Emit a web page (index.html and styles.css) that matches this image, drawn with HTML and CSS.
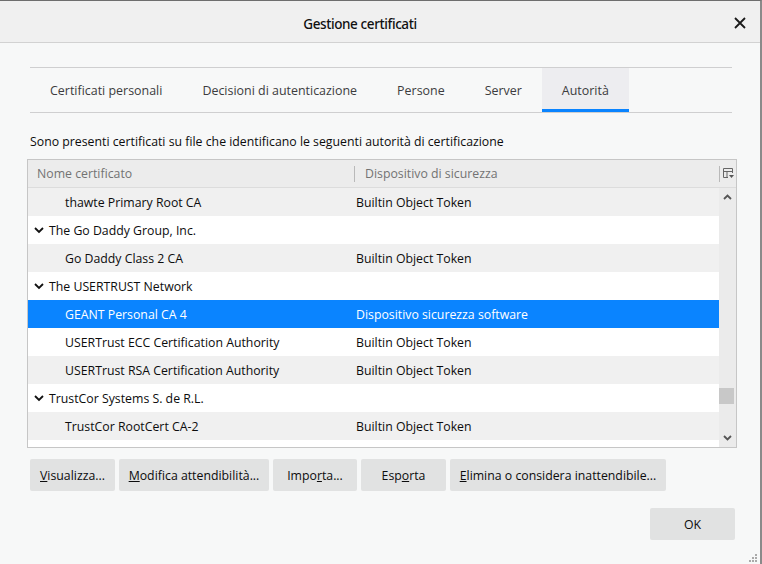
FILE: index.html
```html
<!DOCTYPE html>
<html lang="it">
<head>
<meta charset="utf-8">
<link rel="stylesheet" href="styles.css">
</head>
<body>
<div class="window">
  <div class="titlebar">
    <span class="title">Gestione certificati</span>
    <svg class="close" width="12" height="12" viewBox="0 0 12 12"><path d="M1 1 L11 11 M11 1 L1 11" stroke="#1a1a1a" stroke-width="1.8" fill="none"/></svg>
  </div>
  <div class="content">
    <div class="tabs">
      <div class="tab">Certificati personali</div>
      <div class="tab">Decisioni di autenticazione</div>
      <div class="tab">Persone</div>
      <div class="tab">Server</div>
      <div class="tab selected">Autorità</div>
    </div>
    <p class="desc">Sono presenti certificati su file che identificano le seguenti autorità di certificazione</p>
    <div class="tree">
      <div class="thead">
        <div class="col1">Nome certificato</div>
        <div class="col2">Dispositivo di sicurezza</div>
        <div class="picker">
          <svg width="11" height="11" viewBox="0 0 11 11"><path d="M0.5 0.5 H9.5 V5 M0.5 0.5 V9.5 H5 M0.5 3.5 H9.5 M4 3.5 V9.5" stroke="#666" fill="none"/><path d="M6 7 H11 L8.5 10 Z" fill="#555"/></svg>
        </div>
      </div>
      <div class="tbody">
        <div class="rows">
          <div class="row alt"><span class="name child">thawte Primary Root CA</span><span class="dev">Builtin Object Token</span></div>
          <div class="row"><span class="name parent"><svg class="twisty" width="10" height="7" viewBox="0 0 10 7"><path d="M1 1 L5 5 L9 1" stroke="#111" stroke-width="1.8" fill="none"/></svg>The Go Daddy Group, Inc.</span></div>
          <div class="row alt"><span class="name child">Go Daddy Class 2 CA</span><span class="dev">Builtin Object Token</span></div>
          <div class="row"><span class="name parent"><svg class="twisty" width="10" height="7" viewBox="0 0 10 7"><path d="M1 1 L5 5 L9 1" stroke="#111" stroke-width="1.8" fill="none"/></svg>The USERTRUST Network</span></div>
          <div class="row sel"><span class="name child">GEANT Personal CA 4</span><span class="dev">Dispositivo sicurezza software</span></div>
          <div class="row"><span class="name child">USERTrust ECC Certification Authority</span><span class="dev">Builtin Object Token</span></div>
          <div class="row alt"><span class="name child">USERTrust RSA Certification Authority</span><span class="dev">Builtin Object Token</span></div>
          <div class="row"><span class="name parent"><svg class="twisty" width="10" height="7" viewBox="0 0 10 7"><path d="M1 1 L5 5 L9 1" stroke="#111" stroke-width="1.8" fill="none"/></svg>TrustCor Systems S. de R.L.</span></div>
          <div class="row alt"><span class="name child">TrustCor RootCert CA-2</span><span class="dev">Builtin Object Token</span></div>
        </div>
        <div class="scrollbar">
          <svg class="arrow" width="9" height="6" viewBox="0 0 9 6"><path d="M1 5 L4.5 1.5 L8 5" stroke="#555" stroke-width="1.8" fill="none"/></svg>
          <div class="track"><div class="thumb"></div></div>
          <svg class="arrow" width="9" height="6" viewBox="0 0 9 6"><path d="M1 1 L4.5 4.5 L8 1" stroke="#555" stroke-width="1.8" fill="none"/></svg>
        </div>
      </div>
    </div>
    <div class="actions">
      <button class="btn b1"><u>V</u>isualizza...</button>
      <button class="btn b2"><u>M</u>odifica attendibilità...</button>
      <button class="btn b3">Impo<u>r</u>ta...</button>
      <button class="btn b4">Esp<u>o</u>rta</button>
      <button class="btn b5"><u>E</u>limina o considera inattendibile...</button>
    </div>
    <div class="footer">
      <button class="btn ok">OK</button>
    </div>
  </div>
  <svg class="grip" width="8" height="8" viewBox="0 0 8 8"><g fill="#aaa"><rect x="6" y="0" width="2" height="2"/><rect x="3" y="3" width="2" height="2"/><rect x="6" y="3" width="2" height="2"/><rect x="0" y="6" width="2" height="2"/><rect x="3" y="6" width="2" height="2"/><rect x="6" y="6" width="2" height="2"/></g></svg>
</div>
</body>
</html>
```

FILE: styles.css
```css
* { box-sizing: border-box; }
html, body { margin: 0; padding: 0; }
body {
  width: 762px;
  height: 564px;
  overflow: hidden;
  font-family: "Open Sans", "Noto Sans", sans-serif;
  font-size: 12px;
  color: #0c0c0d;
  background: #f7f8f8;
}
.window {
  position: relative;
  width: 762px;
  height: 564px;
  border-top: 1px solid #6e6e6e;
  border-right: 2px solid #8a8a8a;
  background: #f7f8f8;
  display: flex;
  flex-direction: column;
}
.titlebar {
  height: 42px;
  flex: none;
  background: #f0f0f0;
  border-bottom: 1px solid #d2d2d2;
  display: flex;
  align-items: center;
  justify-content: center;
  position: relative;
  padding-top: 4px;
  padding-right: 40px;
}
.title {
  font-family: "Noto Sans", sans-serif;
  font-size: 13.5px;
  font-weight: 500;
  letter-spacing: -0.4px;
  color: #111;
}
.close {
  position: absolute;
  right: 14px;
  top: 16px;
}
.content {
  flex: 1;
  padding: 24px 28px 0 30px;
  display: flex;
  flex-direction: column;
}
.tabs {
  display: flex;
  border-top: 1px solid #cfcfd0;
  border-bottom: 1px solid #cfcfd0;
  height: 46px;
  width: 702px;
}
.tab {
  height: 44px;
  padding: 4px 20px 0 20px;
  display: flex;
  align-items: center;
  font-size: 12.45px;
  color: #3c3c3e;
  border-bottom: 3px solid transparent;
}
.tab.selected {
  background: #ededf0;
  border-bottom-color: #0a84ff;
}
.desc {
  margin: 20px 0 9px 0;
  font-size: 12.3px;
  color: #0c0c0d;
}
.tree {
  margin-left: -3px;
  width: 710px;
  height: 289px;
  border: 1px solid #c6c6c6;
  background: #fff;
  display: flex;
  flex-direction: column;
}
.thead {
  height: 28px;
  flex: none;
  background: #ececec;
  border-bottom: 1px solid #dcdcdc;
  display: flex;
  align-items: center;
  color: #737373;
  font-size: 12.3px;
}
.col1 { width: 326px; padding-left: 9px; }
.col2 {
  width: 365px;
  padding-left: 10px;
  border-left: 1px solid #b9b9b9;
  line-height: 16px;
}
.picker {
  flex: 1;
  height: 16px;
  border-left: 1px solid #b9b9b9;
  display: flex;
  align-items: center;
  justify-content: center;
}
.tbody {
  flex: 1;
  display: flex;
  overflow: hidden;
}
.rows { width: 691px; }
.row {
  height: 28px;
  display: flex;
  align-items: center;
  font-size: 12.3px;
  color: #0c0c0d;
  background: #fff;
}
.row.alt { background: #f0f0f0; }
.row.sel { background: #0a84ff; color: #fff; }
.name { width: 328px; display: flex; align-items: center; }
.name.child { padding-left: 37px; }
.name.parent { padding-left: 6px; }
.twisty { margin-right: 5px; }
.scrollbar {
  width: 17px;
  background: #ebebeb;
  display: flex;
  flex-direction: column;
  align-items: center;
}
.arrow { flex: none; margin: 6px 0; }
.track { flex: 1; width: 100%; position: relative; }
.thumb {
  position: absolute;
  left: 0;
  right: 2px;
  top: 182px;
  height: 16px;
  background: #c8c8c8;
}
.actions {
  display: flex;
  gap: 4px;
  margin-top: 11px;
}
.btn {
  font-family: "Open Sans", "Noto Sans", sans-serif;
  font-size: 12.3px;
  color: #0c0c0d;
  background: #e1e2e2;
  border: none;
  border-radius: 2px;
  height: 32px;
  padding: 0;
  margin: 0;
}
.b1 { width: 85px; }
.b2 { width: 150px; }
.b3 { width: 84px; }
.b4 { width: 85px; }
.b5 { width: 216px; }
.footer {
  display: flex;
  justify-content: flex-end;
  margin-top: 17px;
  margin-right: -3px;
}
.ok { width: 85px; }
.grip {
  position: absolute;
  right: 3px;
  bottom: 2px;
}
```
